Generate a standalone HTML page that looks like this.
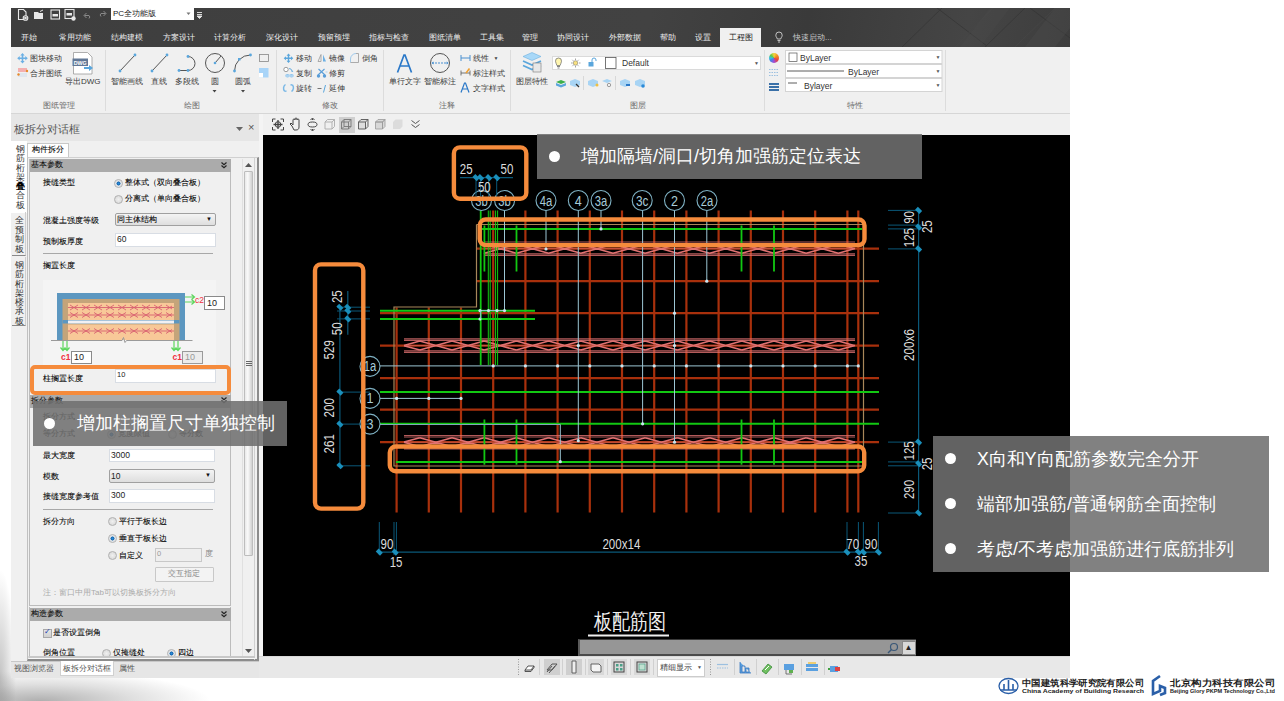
<!DOCTYPE html>
<html><head><meta charset="utf-8">
<style>
*{margin:0;padding:0;box-sizing:border-box}
html,body{width:1284px;height:701px;overflow:hidden;background:#fff;font-family:"Liberation Sans",sans-serif}
#root{position:relative;width:1284px;height:701px;overflow:hidden}
.a{position:absolute}
.t{position:absolute;white-space:nowrap;line-height:1}
.mt{color:#eeeeee;font-size:8px}
.rt{color:#3a3a3a;font-size:8px}
.gl{color:#6a6a6a;font-size:8px}
.pt{color:#000;font-size:8px;-webkit-text-stroke:0.08px #000}
.inp{position:absolute;background:#fff;border:1px solid #d8dde4}
.sel{position:absolute;background:linear-gradient(#f4f4f4,#dedede);border:1px solid #a0a0a0;border-radius:2px}
.sechd{position:absolute;background:#ababab}
.radio{position:absolute;width:9px;height:9px;border-radius:50%;border:1px solid #b0b0b0;background:radial-gradient(circle,#f0f0f0,#d4d4d4)}
.radio.on{background:radial-gradient(circle,#2d8fd8 0,#1565b0 35%,#cfd8e0 45%,#f5f5f5 80%)}
.callout{position:absolute;background:rgba(112,112,112,0.88);color:#fff}
.bul{position:absolute;width:11px;height:11px;border-radius:50%;background:#fff}
.ob{position:absolute;border:4.5px solid #f58b3c;border-radius:7px}
</style></head><body><div id="root">

<!-- smoke texture bottom-left -->
<div class="a" style="left:0;top:560px;width:320px;height:141px;background:radial-gradient(ellipse 170px 30px at 40px 141px,rgba(110,110,110,.55),rgba(150,150,150,.3) 55%,rgba(255,255,255,0) 100%),radial-gradient(ellipse 16px 110px at 0px 120px,rgba(120,120,120,.45),rgba(255,255,255,0) 100%)"></div>
<!-- App window -->
<div class="a" style="left:11px;top:8px;width:1059px;height:670px;background:#f0f0f0"></div>
<!-- title bar -->
<div class="a" style="left:11px;top:8px;width:1059px;height:39px;background:linear-gradient(100deg,#3e3e3e 0%,#424242 60%,#3a3a3a 75%,#454545 90%,#3d3d3d 100%)"></div>
<svg class="a" style="left:880px;top:8px" width="190" height="39" viewBox="880 8 190 39">
<g stroke-width="1" fill="none" opacity="0.45">
<path d="M902,47l40-39" stroke="#2e2e2e"/><path d="M937,8l50,38" stroke="#2c2c2c"/>
<path d="M955,47l38-39" stroke="#4a4a4a"/><path d="M985,47l40-39" stroke="#2f2f2f"/><path d="M1015,47l40-39" stroke="#4c4c4c"/>
<path d="M1030,8l40,30" stroke="#2e2e2e"/>
</g>
<path d="M960,47l30-39h20l-30,39z" fill="#4a4a4a" opacity="0.35"/><path d="M1025,47l30-39h15v20l-15,19z" fill="#4c4c4c" opacity="0.35"/>
</svg>
<!-- quick access dropdown -->
<div class="a" style="left:111px;top:8px;width:83px;height:12px;background:#fff"></div>
<div class="t" style="left:113px;top:10px;font-size:8px;color:#222">PC全功能版</div>
<svg class="a" style="left:186px;top:12px" width="6" height="4"><path d="M0.5,0.5h4l-2,2.5z" fill="#777"/></svg>
<svg class="a" style="left:196px;top:11px" width="7" height="8"><path d="M1,1.5h5M1,3.5h5M1,5h5l-2.5,2.5z" stroke="#e8e8e8" stroke-width="0.9" fill="#e8e8e8"/></svg>

<!-- menu tabs -->
<div class="a" style="left:720px;top:28px;width:41px;height:19px;background:#f0f0f0"></div>
<div class="t mt" style="left:21px;top:34px">开始</div>
<div class="t mt" style="left:59px;top:34px">常用功能</div>
<div class="t mt" style="left:111px;top:34px">结构建模</div>
<div class="t mt" style="left:163px;top:34px">方案设计</div>
<div class="t mt" style="left:214px;top:34px">计算分析</div>
<div class="t mt" style="left:266px;top:34px">深化设计</div>
<div class="t mt" style="left:318px;top:34px">预留预埋</div>
<div class="t mt" style="left:369px;top:34px">指标与检查</div>
<div class="t mt" style="left:429px;top:34px">图纸清单</div>
<div class="t mt" style="left:480px;top:34px">工具集</div>
<div class="t mt" style="left:522px;top:34px">管理</div>
<div class="t mt" style="left:557px;top:34px">协同设计</div>
<div class="t mt" style="left:609px;top:34px">外部数据</div>
<div class="t mt" style="left:660px;top:34px">帮助</div>
<div class="t mt" style="left:695px;top:34px">设置</div>
<div class="t" style="left:729px;top:34px;font-size:8px;color:#222">工程图</div>
<div class="t" style="left:793px;top:34px;font-size:8px;color:#c8c8c8">快速启动...</div>

<!-- ribbon -->
<div class="a" style="left:769px;top:53px;width:10px;height:10px;border-radius:50%;background:conic-gradient(#f7d23a,#f08a24 60deg,#e8453c 120deg,#a04bd8 180deg,#3b8de8 240deg,#38c0e0 270deg,#5cc84a 310deg,#f7d23a)"></div>
<!-- quick access icons -->
<svg class="a" style="left:11px;top:8px" width="100" height="14" viewBox="11 8 100 14">
<g fill="none" stroke="#e8e8e8" stroke-width="1.1">
<path d="M18.5,9.5h5l2.5,2.5v7.5h-7.5z"/><circle cx="25.5" cy="18" r="2.3" fill="#3f3f3f"/><circle cx="25.5" cy="18" r="0.8" fill="#e8e8e8"/>
</g>
<path d="M34,12h4l1,1h4v6h-9z" fill="#e8e8e8"/><path d="M40,11.5l3-1.5" stroke="#e8e8e8" stroke-width="1"/>
<rect x="51" y="10" width="8.5" height="9" fill="none" stroke="#e8e8e8" stroke-width="1.1"/><rect x="52.5" y="14" width="5.5" height="2.5" fill="#e8e8e8"/>
<rect x="65" y="9.5" width="9" height="9" fill="none" stroke="#e8e8e8" stroke-width="1.1"/><rect x="66.5" y="13" width="5.5" height="2.5" fill="#e8e8e8"/><circle cx="73.5" cy="18.5" r="2.2" fill="#e8e8e8"/>
<path d="M84,15.5l2.5-2.5M84,15.5l2.5,2.5M84.5,15.5h4.5a2,2 0 0 1 0,3" fill="none" stroke="#8a8a8a" stroke-width="1"/>
<path d="M106,13.5l-2.5-2.5M106,13.5l-2.5,2.5M105.5,13.5h-4.5a2,2 0 0 0 0,3" fill="none" stroke="#8a8a8a" stroke-width="1"/>
</svg>

<!-- group: 图纸管理 -->
<svg class="a" style="left:11px;top:47px" width="1059" height="67" viewBox="11 47 1059 67" font-family="Liberation Sans, sans-serif">
<!-- separators -->
<g stroke="#dcdcdc" stroke-width="1">
<line x1="105.5" y1="50" x2="105.5" y2="111"/><line x1="276.5" y1="50" x2="276.5" y2="111"/><line x1="383.5" y1="50" x2="383.5" y2="111"/>
<line x1="510.5" y1="50" x2="510.5" y2="111"/><line x1="764.5" y1="50" x2="764.5" y2="111"/><line x1="945.5" y1="50" x2="945.5" y2="111"/>
</g>
<!-- move icon -->
<g fill="#6cb0e4"><path d="M22.5,53l2.2,2.5h-1.4v2h2v-1.4l2.5,2.2-2.5,2.2v-1.4h-2v2h1.4l-2.2,2.5-2.2-2.5h1.4v-2h-2v1.4l-2.5-2.2 2.5-2.2v1.4h2v-2h-1.4z"/></g>
<!-- merge icon -->
<rect x="18" y="68" width="9" height="4" fill="#f3b0b0"/><rect x="18" y="73" width="9" height="4" fill="#dfe6ee"/><circle cx="18.5" cy="74.5" r="1.2" fill="#e88a2a"/><circle cx="27" cy="71" r="1.2" fill="#e88a2a"/>
<!-- DWG icon -->
<path d="M73.5,52.5h14l4.5,4.5v17h-18.5z" fill="#fff" stroke="#9a9a9a" stroke-width="0.8"/>
<rect x="72.5" y="58.5" width="15.5" height="7.5" fill="#627896"/><text x="80.2" y="64.6" font-size="6" fill="#fff" text-anchor="middle" font-weight="bold" textLength="13" lengthAdjust="spacingAndGlyphs">DWG</text>
<path d="M84,67h5v-2l4,3-4,3v-2h-5z" fill="#5aa6dc"/>
<!-- draw icons -->
<g stroke="#555" stroke-width="1" fill="none">
<line x1="120" y1="71" x2="135" y2="55"/><line x1="152" y1="71" x2="167" y2="55"/>
<path d="M179,70.5h9a7,7 0 0 0 0,-14"/><circle cx="215" cy="63" r="9.5" stroke="#555"/><line x1="215" y1="63" x2="221" y2="56"/>
<path d="M234.5,71a16,16 0 0 1 16,-16"/>
<rect x="259.5" y="54.5" width="9" height="7" stroke="#888" stroke-width="0.8"/>
</g>
<g fill="#5aa6dc"><circle cx="120" cy="71" r="1.4"/><circle cx="135" cy="55" r="1.4"/><circle cx="152" cy="71" r="1.4"/><circle cx="167" cy="55" r="1.4"/>
<circle cx="179" cy="70.5" r="1.4"/><circle cx="188" cy="70.5" r="1.4"/><circle cx="188" cy="56.5" r="1.4"/><circle cx="215" cy="63" r="1.3"/>
<circle cx="234.5" cy="71" r="1.4"/><circle cx="250.5" cy="55" r="1.4"/><rect x="238" y="58" width="2.5" height="2.5"/></g>
<rect x="259" y="68" width="9.5" height="9.5" fill="#a8d4f8"/><rect x="259" y="73" width="4" height="4.5" fill="#fff"/>
<path d="M212.5,90h4l-2,2.5zM241,90h4l-2,2.5z" fill="#444"/>
<!-- modify icons -->
<path d="M288.5,53.5l2,2.3h-1.3v1.8h1.8v-1.3l2.3,2-2.3,2v-1.3h-1.8v1.8h1.3l-2,2.3-2-2.3h1.3v-1.8h-1.8v1.3l-2.3-2 2.3-2v1.3h1.8v-1.8h-1.3z" fill="#5aa6dc"/>
<circle cx="286" cy="69.5" r="2.2" fill="#fff" stroke="#777" stroke-width="0.7"/><path d="M289,68.5a3,3 0 0 1 3,2.5" fill="none" stroke="#5aa6dc" stroke-width="0.9"/><path d="M291,71.5l1.5-1 0.8,1.6z" fill="#5aa6dc"/>
<ellipse cx="287.5" cy="75.8" rx="2.3" ry="1.7" fill="#8fc4ec"/><ellipse cx="291.5" cy="75.8" rx="2.3" ry="1.7" fill="#8fc4ec"/><path d="M285.5,76h8" stroke="#fff" stroke-width="0.5"/>
<path d="M285.5,84.5a4.5,4.5 0 0 0 -1,6.5M284.5,91l2,0.3M291.5,91.5a4.5,4.5 0 0 0 1,-6.5M292.5,85l-2,-0.3" fill="none" stroke="#7ab8e6" stroke-width="1.5"/>
<path d="M318,61.5l3-7v7z" fill="none" stroke="#999" stroke-width="0.8"/><path d="M323,61.5v-7l3,7z" fill="#6cb0e4"/>
<path d="M318.5,69l6.5,6M324.5,69l-6.5,6" stroke="#5a9ed8" stroke-width="1.1"/><circle cx="318.5" cy="76" r="1.7" fill="#5a9ed8"/><circle cx="324.5" cy="76" r="1.7" fill="#5a9ed8"/><path d="M325.5,72h2" stroke="#9cc6e8" stroke-width="0.8"/>
<path d="M317.5,88.5h4" stroke="#666" stroke-width="0.9"/><path d="M323.5,92.5l2-7.5" stroke="#5aa6dc" stroke-width="1"/>
<path d="M350.5,62.5v-3.5a5.5,5.5 0 0 1 5.5,-5.5" fill="none" stroke="#8cc0ea" stroke-width="0.8"/><path d="M356,53.5h2.5v9h-8" fill="none" stroke="#999" stroke-width="0.8"/>
<!-- annotation -->
<path d="M397.5,72.5l6.5-17.5h1l6.5,17.5M400,66h9" fill="none" stroke="#2a78c8" stroke-width="1.7"/>
<circle cx="440" cy="63" r="9.5" fill="none" stroke="#555" stroke-width="1"/><path d="M432,63h16" stroke="#4a90d0" stroke-width="1" stroke-dasharray="2,1"/><path d="M431.5,63l2,-1.5v3zM448.5,63l-2,-1.5v3z" fill="#4a90d0"/>
<path d="M461,55v6M470,55v6M461,58h9" stroke="#4a90d0" stroke-width="1"/>
<path d="M461,73h9M461,70.5v5M470,70.5v5" stroke="#555" stroke-width="0.8"/><path d="M466,73l3.5,-4.5" stroke="#f0a030" stroke-width="1.6"/>
<path d="M461,92.5l3.5-9.5h1l3.5,9.5M462.5,89h5" fill="none" stroke="#2a78c8" stroke-width="1.2"/>
<text x="493.5" y="60" font-size="5" fill="#444">▼</text>
<!-- layer -->
<path d="M532,52.5l9,4-9,4-9-4z" fill="#a8d8f8" stroke="#5aa6dc" stroke-width="0.5"/><path d="M523,61l9,4 9-4" fill="none" stroke="#5aa6dc" stroke-width="1.6"/><path d="M523,65.5l9,4 9-4" fill="none" stroke="#5aa6dc" stroke-width="1.6"/>
<rect x="533" y="63" width="8" height="9" fill="#e8e8e8" stroke="#777" stroke-width="0.6"/>
<rect x="552.5" y="56.5" width="208" height="13" fill="#fff" stroke="#dadada"/>
<path d="M558.5,58a3,3 0 0 1 3,3.2c0,1.8-1.1,2.5-1.4,4.3h-3.2c-0.3-1.8-1.4-2.5-1.4-4.3a3,3 0 0 1 3,-3.2z" fill="#fff6b0" stroke="#666" stroke-width="0.7"/><path d="M557,66.5h3M557.5,68h2" stroke="#666" stroke-width="0.8"/>
<circle cx="575.5" cy="63" r="2.3" fill="#f8e080" stroke="#666" stroke-width="0.5"/><g stroke="#666" stroke-width="0.6"><path d="M575.5,58.5v1.5M575.5,66v1.5M571,63h1.5M579,63h1.5M572.3,59.8l1,1M577.7,65.2l1,1M572.3,66.2l1-1M577.7,60.8l1-1"/></g>
<rect x="588.5" y="62" width="5" height="4.5" fill="#5aa6dc"/><path d="M592,62v-2a2,2 0 0 1 4,0v1" fill="none" stroke="#5aa6dc" stroke-width="1"/>
<rect x="605.5" y="57.5" width="10.5" height="11" fill="#fff" stroke="#555" stroke-width="0.8"/>
<text x="622" y="66" font-size="8.5" fill="#333">Default</text><text x="754" y="65" font-size="5" fill="#555">▼</text>
<g fill="#5aa6dc"><path d="M556,82l5-2 5,2-5,2z" fill="#3cb04a"/><path d="M556,83v2.5l5,2 5-2v-2.5l-5,2z"/>
<path d="M570,81l5-2 5,2v4l-5,2-5-2z" fill="#a8d4f4"/><path d="M576,84l3,3" stroke="#333" stroke-width="1.2"/>
<path d="M588,81l5-2 5,2v4l-5,2-5-2z" fill="#a8d4f4"/><circle cx="597" cy="85" r="1.5" fill="#f0c040"/>
<path d="M602,81l5-2 5,2-5,2z" fill="#a8d4f4"/><circle cx="609" cy="85" r="1.7" fill="none" stroke="#666" stroke-width="0.6"/>
<path d="M620,81l5-2 5,2v4l-5,2-5-2z" fill="#a8d4f4"/><path d="M626,85h4" stroke="#2a78c8" stroke-width="2"/>
<path d="M635,81l5-2 5,2v4l-5,2-5-2z" fill="#a8d4f4"/><circle cx="643" cy="86" r="1.8" fill="#2a8ad8"/>
</g>
<g stroke="#d8d8d8"><line x1="583.5" y1="76" x2="583.5" y2="90"/><line x1="615.5" y1="76" x2="615.5" y2="90"/></g>
<!-- properties -->

<defs><linearGradient id="cw" x1="0" y1="0" x2="1" y2="1"><stop offset="0" stop-color="#f5a623"/><stop offset=".35" stop-color="#7ed321"/><stop offset=".6" stop-color="#4a90e2"/><stop offset="1" stop-color="#bd10e0"/></linearGradient></defs>
<g stroke="#9cc0e0" stroke-width="1" stroke-dasharray="1.5,1"><line x1="769" y1="69.5" x2="779" y2="69.5"/><line x1="769" y1="72.5" x2="779" y2="72.5"/><line x1="769" y1="75.5" x2="779" y2="75.5"/></g>
<g fill="#3a70a8"><rect x="769" y="83" width="10" height="2"/><rect x="769" y="86" width="10" height="2"/><rect x="769" y="89" width="10" height="2"/></g>
<g fill="#fff" stroke="#d4d4d4"><rect x="785.5" y="50.5" width="156.5" height="13"/><rect x="785.5" y="64.5" width="156.5" height="13"/><rect x="785.5" y="78.5" width="156.5" height="13"/></g>
<rect x="789" y="53" width="8" height="8.5" fill="#fff" stroke="#555" stroke-width="0.7"/>
<text x="800" y="60.5" font-size="8.5" fill="#333">ByLayer</text>
<line x1="787" y1="71" x2="844" y2="71" stroke="#333" stroke-width="0.8"/><text x="848" y="74.5" font-size="8.5" fill="#333">ByLayer</text>
<line x1="788" y1="83" x2="797" y2="83" stroke="#333" stroke-width="0.8"/><text x="804" y="88.5" font-size="8.5" fill="#333">Bylayer</text>
<g font-size="5" fill="#555"><text x="935.5" y="59">▼</text><text x="935.5" y="73">▼</text><text x="935.5" y="87">▼</text></g>
</svg>
<div class="t rt" style="left:30px;top:55px">图块移动</div>
<div class="t rt" style="left:30px;top:70px">合并图纸</div>
<div class="t rt" style="left:65px;top:78px">导出DWG</div>
<div class="t rt" style="left:111px;top:78px">智能画线</div>
<div class="t rt" style="left:151px;top:78px">直线</div>
<div class="t rt" style="left:175px;top:78px">多段线</div>
<div class="t rt" style="left:211px;top:78px">圆</div>
<div class="t rt" style="left:235px;top:78px">圆弧</div>
<div class="t rt" style="left:296px;top:55px">移动</div>
<div class="t rt" style="left:329px;top:55px">镜像</div>
<div class="t rt" style="left:362px;top:55px">倒角</div>
<div class="t rt" style="left:296px;top:70px">复制</div>
<div class="t rt" style="left:329px;top:70px">修剪</div>
<div class="t rt" style="left:296px;top:85px">旋转</div>
<div class="t rt" style="left:329px;top:85px">延伸</div>
<div class="t rt" style="left:389px;top:78px">单行文字</div>
<div class="t rt" style="left:424px;top:78px">智能标注</div>
<div class="t rt" style="left:473px;top:55px">线性</div>
<div class="t rt" style="left:473px;top:70px">标注样式</div>
<div class="t rt" style="left:473px;top:85px">文字样式</div>
<div class="t rt" style="left:516px;top:78px">图层特性</div>
<div class="t gl" style="left:43px;top:102px">图纸管理</div>
<div class="t gl" style="left:184px;top:102px">绘图</div>
<div class="t gl" style="left:322px;top:102px">修改</div>
<div class="t gl" style="left:439px;top:102px">注释</div>
<div class="t gl" style="left:630px;top:102px">图层</div>
<div class="t gl" style="left:847px;top:102px">特性</div>
<div class="a" style="left:11px;top:113px;width:1059px;height:1px;background:#d6d6d6"></div>

<!-- below ribbon area -->
<div class="a" style="left:11px;top:114px;width:248px;height:27px;background:#e6e6e6"></div>
<div class="t" style="left:14px;top:123.5px;font-size:10.6px;color:#555">板拆分对话框</div>
<svg class="a" style="left:235px;top:126px" width="9" height="6"><path d="M1,1h7l-3.5,4z" fill="#666"/></svg>
<div class="t" style="left:248px;top:122px;font-size:11px;color:#555">×</div>
<!-- panel body -->
<div class="a" style="left:11px;top:141px;width:248px;height:520px;background:#f0f0f0"></div>
<!-- vertical tabs -->
<div class="a" style="left:11px;top:141px;width:16px;height:72px;background:#fff"></div>
<div class="a" style="left:12px;top:212px;width:14px;height:44px;border-bottom:1px solid #8a8a8a;border-right:1px solid #cfcfcf"></div>
<div class="a" style="left:12px;top:257px;width:14px;height:69px;border-bottom:1px solid #8a8a8a;border-right:1px solid #cfcfcf"></div>
<div class="t" style="left:16px;top:145px;font-size:9px;line-height:9.3px;width:10px;white-space:normal;color:#333">钢筋桁架<b style="color:#000">叠</b>合板</div>
<div class="t" style="left:15px;top:216px;font-size:9px;line-height:9.5px;width:10px;white-space:normal;color:#333">全预制板</div>
<div class="t" style="left:15px;top:261px;font-size:9px;line-height:9.3px;width:10px;white-space:normal;color:#333">钢筋桁架楼承板</div>
<!-- tab strip -->
<div class="a" style="left:27px;top:143px;width:42px;height:15px;background:#fff;border:1px solid #c8c8c8;border-bottom:none"></div>
<div class="t pt" style="left:32px;top:146px">构件拆分</div>
<!-- content frame -->
<div class="a" style="left:27px;top:157px;width:232px;height:504px;border:1px solid #c0c0c0;border-top-color:#d0d0d0;border-right:2px solid #8c8c8c;border-bottom:2px solid #8c8c8c;background:#f0f0f0"></div>
<div class="a" style="left:254px;top:157px;width:1px;height:503px;background:#d0d0d0"></div>
<!-- scroll content border -->
<div class="a" style="left:29px;top:159px;width:202px;height:447px;border:1px solid #bcbcbc;border-top:none"></div>
<div class="a" style="left:29px;top:607px;width:202px;height:50px;border-left:1px solid #bcbcbc;border-right:1px solid #bcbcbc"></div>
<div class="a" style="left:28px;top:656px;width:227px;height:2px;background:#d8d8d8"></div>
<!-- scrollbar -->
<div class="a" style="left:242px;top:159px;width:12px;height:497px;background:#f0f0f0;border-left:1px solid #e0e0e0"></div>
<div class="a" style="left:243.5px;top:171px;width:9.5px;height:385px;background:linear-gradient(90deg,#e8e8e8,#fafafa 40%,#d0d0d0);border:1px solid #bdbdbd;border-radius:1px"></div>
<svg class="a" style="left:244px;top:162px" width="9" height="6"><path d="M1,5h7l-3.5,-4z" fill="#555"/></svg>
<svg class="a" style="left:244px;top:648px" width="9" height="6"><path d="M1,1h7l-3.5,4z" fill="#555"/></svg>
<div class="a" style="left:245.5px;top:361px;width:6px;height:5px;border-top:1px solid #666;border-bottom:1px solid #666"></div><div class="a" style="left:245.5px;top:363px;width:6px;height:1px;background:#666"></div>
<!-- section 基本参数 -->
<div class="sechd" style="left:30px;top:159px;width:201px;height:13px"></div>
<div class="t pt" style="left:31px;top:161px;color:#111">基本参数</div>
<svg class="a" style="left:220px;top:161px" width="8" height="9"><path d="M1.5,1.5l2.5,2.2 2.5-2.2M1.5,4.5l2.5,2.2 2.5-2.2" fill="none" stroke="#222" stroke-width="1.2"/></svg>
<div class="t pt" style="left:43px;top:179px">接缝类型</div>
<div class="radio on" style="left:113.5px;top:178.5px"></div><div class="t pt" style="left:125px;top:179px">整体式（双向叠合板）</div>
<div class="radio" style="left:113.5px;top:194.5px"></div><div class="t pt" style="left:125px;top:195px">分离式（单向叠合板）</div>
<div class="t pt" style="left:43px;top:216.5px">混凝土强度等级</div>
<div class="sel" style="left:115px;top:212.5px;width:100.5px;height:13.5px"></div><div class="t pt" style="left:117px;top:215.5px">同主体结构</div><div class="t" style="left:206px;top:216px;font-size:6px;color:#111">▼</div>
<div class="t pt" style="left:43px;top:238px">预制板厚度</div>
<div class="inp" style="left:115px;top:233px;width:100.5px;height:14px"></div><div class="t" style="left:117px;top:235px;font-size:8.5px;color:#222">60</div>
<div class="a" style="left:43px;top:253px;width:170px;height:1px;background:#a8a8a8"></div>
<div class="t pt" style="left:43px;top:261.5px">搁置长度</div>
<!-- illustration -->
<svg class="a" style="left:43px;top:280px" width="185" height="86" viewBox="43 280 185 86">
<rect x="43" y="280" width="173" height="86" fill="#f4f4f4"/>
<rect x="57" y="293" width="128" height="47" fill="#5c97c0"/>
<rect x="62.5" y="299" width="117" height="41" fill="#c4a47a"/>
<rect x="68" y="303" width="106" height="17" fill="#f8c898"/>
<rect x="62.5" y="320" width="117" height="3.5" fill="#5c97c0"/>
<rect x="68" y="320.5" width="106" height="3" fill="#f0f0f4"/>
<rect x="68" y="324.5" width="106" height="15.5" fill="#f8c898"/>
<g stroke="#d86070" stroke-width="0.9" fill="none">
<line x1="68" y1="307.5" x2="174" y2="307.5"/><line x1="68" y1="315" x2="174" y2="315"/><line x1="68" y1="331" x2="174" y2="331"/>
<path d="M70,305l8,5M70,310l8,-5M82,305l8,5M82,310l8,-5M94,305l8,5M94,310l8,-5M106,305l8,5M106,310l8,-5M118,305l8,5M118,310l8,-5M130,305l8,5M130,310l8,-5M142,305l8,5M142,310l8,-5M154,305l8,5M154,310l8,-5M166,305l6,4M166,310l6,-4"/>
<path d="M70,312.5l8,5M70,317.5l8,-5M82,312.5l8,5M82,317.5l8,-5M94,312.5l8,5M94,317.5l8,-5M106,312.5l8,5M106,317.5l8,-5M118,312.5l8,5M118,317.5l8,-5M130,312.5l8,5M130,317.5l8,-5M142,312.5l8,5M142,317.5l8,-5M154,312.5l8,5M154,317.5l8,-5M166,312.5l6,4M166,317.5l6,-4"/>
<path d="M70,328.5l8,5M70,333.5l8,-5M82,328.5l8,5M82,333.5l8,-5M94,328.5l8,5M94,333.5l8,-5M106,328.5l8,5M106,333.5l8,-5M118,328.5l8,5M118,333.5l8,-5M130,328.5l8,5M130,333.5l8,-5M142,328.5l8,5M142,333.5l8,-5M154,328.5l8,5M154,333.5l8,-5M166,328.5l6,4M166,333.5l6,-4"/>
</g>
<path d="M51,340.5h71l1.5,-3 1.5,5 1.5,-2h66" fill="none" stroke="#9a9a9a" stroke-width="1"/>
<g stroke="#5cd65c" stroke-width="1.2" fill="none">
<path d="M63,341v9M60.5,347.5l2.5,3 2.5,-3M67,341v9M64.5,347.5l2.5,3 2.5,-3"/>
<path d="M174,341v9M171.5,347.5l2.5,3 2.5,-3M178,341v9M175.5,347.5l2.5,3 2.5,-3"/>
<path d="M185,297h9M191.5,294.5l3,2.5-3,2.5M185,302h9M191.5,299.5l3,2.5-3,2.5"/>
</g>
<text x="195" y="303" font-size="8.5" fill="#f03040" font-family="Liberation Sans, sans-serif">c2</text>
<text x="61" y="359.5" font-size="8.5" fill="#f03040" font-weight="bold" font-family="Liberation Sans, sans-serif">c1</text>
<text x="172.5" y="359.5" font-size="8.5" fill="#f03040" font-weight="bold" font-family="Liberation Sans, sans-serif">c1</text>
</svg>
<div class="inp" style="left:204px;top:296px;width:20.5px;height:13.5px;border-color:#8a8a8a"></div><div class="t" style="left:207px;top:298.5px;font-size:9px;color:#222">10</div>
<div class="inp" style="left:71px;top:350.5px;width:21px;height:13.5px;border-color:#8a8a8a"></div><div class="t" style="left:74px;top:353px;font-size:9px;color:#222">10</div>
<div class="inp" style="left:182px;top:350.5px;width:21px;height:13.5px;border-color:#9a9a9a;background:#ececec"></div><div class="t" style="left:185px;top:353px;font-size:9px;color:#999">10</div>
<div class="t pt" style="left:43px;top:374.5px">柱搁置长度</div>
<div class="inp" style="left:115px;top:369px;width:100.5px;height:14px"></div><div class="t" style="left:117px;top:371px;font-size:7.5px;color:#222">10</div>
<div class="ob" style="left:30px;top:365px;width:200.5px;height:29.5px;border-width:4.3px;border-radius:5px"></div>
<!-- section 拆分参数 -->
<div class="sechd" style="left:30px;top:395px;width:201px;height:13px"></div>
<div class="t pt" style="left:31px;top:397px;color:#111">拆分参数</div>
<svg class="a" style="left:220px;top:396px" width="8" height="9"><path d="M1.5,1.5l2.5,2.2 2.5-2.2M1.5,4.5l2.5,2.2 2.5-2.2" fill="none" stroke="#222" stroke-width="1.2"/></svg>
<div class="t pt" style="left:43px;top:413px">拆分方式</div>
<div class="t pt" style="left:43px;top:430px">等分方式</div>
<div class="radio on" style="left:107px;top:429.5px"></div><div class="t pt" style="left:118px;top:430px">宽度限值</div>
<div class="radio" style="left:168px;top:429.5px"></div><div class="t pt" style="left:179px;top:430px">等分数</div>
<div class="t pt" style="left:43px;top:452px">最大宽度</div>
<div class="inp" style="left:108.5px;top:448.5px;width:106px;height:13.5px"></div><div class="t" style="left:111px;top:450.5px;font-size:8.5px;color:#222">3000</div>
<div class="t pt" style="left:43px;top:472.5px">模数</div>
<div class="sel" style="left:108.5px;top:468.5px;width:106px;height:14px"></div><div class="t" style="left:111px;top:471.5px;font-size:8.5px;color:#222">10</div><div class="t" style="left:205px;top:472px;font-size:6px;color:#111">▼</div>
<div class="t pt" style="left:43px;top:493px">接缝宽度参考值</div>
<div class="inp" style="left:108.5px;top:488.5px;width:106px;height:14.5px"></div><div class="t" style="left:111px;top:490.5px;font-size:8.5px;color:#222">300</div>
<div class="a" style="left:43px;top:509px;width:170px;height:1px;background:#a8a8a8"></div>
<div class="t pt" style="left:43px;top:517.5px">拆分方向</div>
<div class="radio" style="left:107.5px;top:517px"></div><div class="t pt" style="left:119px;top:517.5px">平行于板长边</div>
<div class="radio on" style="left:107.5px;top:534px"></div><div class="t pt" style="left:119px;top:534.5px">垂直于板长边</div>
<div class="radio" style="left:107.5px;top:551px"></div><div class="t pt" style="left:119px;top:551.5px">自定义</div>
<div class="inp" style="left:154.5px;top:547.5px;width:47px;height:14px;background:#eeeeee;border-color:#c8c8c8"></div><div class="t" style="left:157px;top:549.5px;font-size:7.5px;color:#999">0</div>
<div class="t" style="left:205px;top:550px;font-size:8px;color:#888">度</div>
<div class="a" style="left:154.5px;top:566.5px;width:59px;height:15px;background:#f3f3f3;border:1px solid #c8c8c8;border-radius:1px"></div><div class="t" style="left:168px;top:570px;font-size:8px;color:#888">交互指定</div>
<div class="t" style="left:43px;top:589px;font-size:8px;color:#aaa">注：窗口中用Tab可以切换板拆分方向</div>
<!-- section 构造参数 -->
<div class="sechd" style="left:30px;top:608px;width:201px;height:12.5px"></div>
<div class="t pt" style="left:31px;top:610px;color:#111">构造参数</div>
<svg class="a" style="left:220px;top:609.5px" width="8" height="9"><path d="M1.5,1.5l2.5,2.2 2.5-2.2M1.5,4.5l2.5,2.2 2.5-2.2" fill="none" stroke="#222" stroke-width="1.2"/></svg>
<div class="a" style="left:43px;top:629px;width:8.5px;height:8.5px;background:linear-gradient(#e4e4e4,#d0d0d0);border:1px solid #a8a8a8"></div><div class="t" style="left:44px;top:628px;font-size:8px;color:#2040b0">✓</div>
<div class="t pt" style="left:53px;top:629px">是否设置倒角</div>
<div class="t pt" style="left:43px;top:649px">倒角位置</div>
<div class="radio" style="left:101.5px;top:649px"></div><div class="t pt" style="left:113px;top:649px">仅掩缝处</div>
<div class="radio on" style="left:166.5px;top:649px"></div><div class="t pt" style="left:178px;top:649px">四边</div>
<!-- clip bottom of scroll content -->
<div class="a" style="left:29px;top:656px;width:226px;height:3px;background:#f8f8f8;border-top:2px solid #c8c8c8"></div>
<!-- bottom tabs -->
<div class="a" style="left:11px;top:661px;width:248px;height:17px;background:#e6e6e6;border-top:1px solid #c8c8c8"></div>
<div class="t" style="left:14px;top:664.5px;font-size:8px;color:#555">视图浏览器</div>
<div class="a" style="left:60px;top:661px;width:54px;height:15px;background:#fff;border:1px solid #d0d0d0;border-top:none"></div>
<div class="t" style="left:63px;top:664.5px;font-size:8px;color:#555">板拆分对话框</div>
<div class="t" style="left:119px;top:664.5px;font-size:8px;color:#555">属性</div>

<!-- drawing area -->
<div class="a" style="left:263px;top:135px;width:807px;height:521px;background:#000"></div>
<svg class="a" style="left:263px;top:135px" width="807" height="521" viewBox="263 135 807 521" font-family="Liberation Sans, sans-serif"><line x1="396.6" y1="307.5" x2="396.6" y2="512.5" stroke="#a8300c" stroke-width="2.2"/><line x1="428.8" y1="307.5" x2="428.8" y2="512.5" stroke="#a8300c" stroke-width="2.2"/><line x1="461.0" y1="307.5" x2="461.0" y2="512.5" stroke="#a8300c" stroke-width="2.2"/><line x1="493.20000000000005" y1="210.5" x2="493.20000000000005" y2="512.5" stroke="#a8300c" stroke-width="2.2"/><line x1="525.4000000000001" y1="210.5" x2="525.4000000000001" y2="512.5" stroke="#a8300c" stroke-width="2.2"/><line x1="557.6" y1="210.5" x2="557.6" y2="512.5" stroke="#a8300c" stroke-width="2.2"/><line x1="589.8000000000001" y1="210.5" x2="589.8000000000001" y2="512.5" stroke="#a8300c" stroke-width="2.2"/><line x1="622.0" y1="210.5" x2="622.0" y2="512.5" stroke="#a8300c" stroke-width="2.2"/><line x1="654.2" y1="210.5" x2="654.2" y2="512.5" stroke="#a8300c" stroke-width="2.2"/><line x1="686.4000000000001" y1="210.5" x2="686.4000000000001" y2="512.5" stroke="#a8300c" stroke-width="2.2"/><line x1="718.6" y1="210.5" x2="718.6" y2="512.5" stroke="#a8300c" stroke-width="2.2"/><line x1="750.8000000000001" y1="210.5" x2="750.8000000000001" y2="512.5" stroke="#a8300c" stroke-width="2.2"/><line x1="783.0" y1="210.5" x2="783.0" y2="512.5" stroke="#a8300c" stroke-width="2.2"/><line x1="815.2" y1="210.5" x2="815.2" y2="512.5" stroke="#a8300c" stroke-width="2.2"/><line x1="847.4000000000001" y1="210.5" x2="847.4000000000001" y2="512.5" stroke="#a8300c" stroke-width="2.2"/><line x1="858.3" y1="210.5" x2="858.3" y2="512.5" stroke="#a8300c" stroke-width="2.2"/><line x1="477" y1="248.7" x2="879" y2="248.7" stroke="#a8300c" stroke-width="2.2"/><line x1="477" y1="281.2" x2="879" y2="281.2" stroke="#a8300c" stroke-width="2.2"/><line x1="380" y1="313.2" x2="879" y2="313.2" stroke="#a8300c" stroke-width="2.2"/><line x1="380" y1="345.6" x2="879" y2="345.6" stroke="#a8300c" stroke-width="2.2"/><line x1="380" y1="378.1" x2="879" y2="378.1" stroke="#a8300c" stroke-width="2.2"/><line x1="380" y1="409.6" x2="879" y2="409.6" stroke="#a8300c" stroke-width="2.2"/><line x1="380" y1="442.2" x2="879" y2="442.2" stroke="#a8300c" stroke-width="2.2"/><polyline points="476.5,224.5 863.5,224.5 863.5,466 394,466 394,307 476.5,307 476.5,224.5" fill="none" stroke="#a8885a" stroke-width="1.2"/><line x1="484" y1="242.0" x2="855" y2="242.0" stroke="#e07272" stroke-width="1.2" opacity="0.8"/><line x1="484" y1="243.5" x2="855" y2="243.5" stroke="#e07272" stroke-width="1.2" opacity="0.8"/><line x1="484" y1="253.89999999999998" x2="855" y2="253.89999999999998" stroke="#e07272" stroke-width="1.2" opacity="0.8"/><line x1="484" y1="255.39999999999998" x2="855" y2="255.39999999999998" stroke="#e07272" stroke-width="1.2" opacity="0.8"/><line x1="484" y1="248.7" x2="855" y2="248.7" stroke="#e07272" stroke-width="1" opacity="0.6"/><path d="M484.0,253.1L484.2,253.2M484.2,253.2L516.4,244.2M516.4,244.2L548.6,253.2M548.6,253.2L580.8,244.2M580.8,244.2L613.0,253.2M613.0,253.2L645.2,244.2M645.2,244.2L677.4,253.2M677.4,253.2L709.6,244.2M709.6,244.2L741.8,253.2M741.8,253.2L774.0,244.2M774.0,244.2L806.2,253.2M806.2,253.2L838.4,244.2M838.4,244.2L855.0,248.8M484.0,244.3L484.2,244.2M484.2,244.2L516.4,253.2M516.4,253.2L548.6,244.2M548.6,244.2L580.8,253.2M580.8,253.2L613.0,244.2M613.0,244.2L645.2,253.2M645.2,253.2L677.4,244.2M677.4,244.2L709.6,253.2M709.6,253.2L741.8,244.2M741.8,244.2L774.0,253.2M774.0,253.2L806.2,244.2M806.2,244.2L838.4,253.2M838.4,253.2L855.0,248.6" fill="none" stroke="#e07272" stroke-width="1.6"/><line x1="404" y1="338.90000000000003" x2="855" y2="338.90000000000003" stroke="#e07272" stroke-width="1.2" opacity="0.8"/><line x1="404" y1="340.40000000000003" x2="855" y2="340.40000000000003" stroke="#e07272" stroke-width="1.2" opacity="0.8"/><line x1="404" y1="350.8" x2="855" y2="350.8" stroke="#e07272" stroke-width="1.2" opacity="0.8"/><line x1="404" y1="352.3" x2="855" y2="352.3" stroke="#e07272" stroke-width="1.2" opacity="0.8"/><line x1="404" y1="345.6" x2="855" y2="345.6" stroke="#e07272" stroke-width="1" opacity="0.6"/><path d="M404.0,345.7L419.8,350.1M419.8,350.1L452.0,341.1M452.0,341.1L484.2,350.1M484.2,350.1L516.4,341.1M516.4,341.1L548.6,350.1M548.6,350.1L580.8,341.1M580.8,341.1L613.0,350.1M613.0,350.1L645.2,341.1M645.2,341.1L677.4,350.1M677.4,350.1L709.6,341.1M709.6,341.1L741.8,350.1M741.8,350.1L774.0,341.1M774.0,341.1L806.2,350.1M806.2,350.1L838.4,341.1M838.4,341.1L855.0,345.7M404.0,345.5L419.8,341.1M419.8,341.1L452.0,350.1M452.0,350.1L484.2,341.1M484.2,341.1L516.4,350.1M516.4,350.1L548.6,341.1M548.6,341.1L580.8,350.1M580.8,350.1L613.0,341.1M613.0,341.1L645.2,350.1M645.2,350.1L677.4,341.1M677.4,341.1L709.6,350.1M709.6,350.1L741.8,341.1M741.8,341.1L774.0,350.1M774.0,350.1L806.2,341.1M806.2,341.1L838.4,350.1M838.4,350.1L855.0,345.5" fill="none" stroke="#e07272" stroke-width="1.6"/><line x1="404" y1="435.5" x2="855" y2="435.5" stroke="#e07272" stroke-width="1.2" opacity="0.8"/><line x1="404" y1="437.0" x2="855" y2="437.0" stroke="#e07272" stroke-width="1.2" opacity="0.8"/><line x1="404" y1="447.4" x2="855" y2="447.4" stroke="#e07272" stroke-width="1.2" opacity="0.8"/><line x1="404" y1="448.9" x2="855" y2="448.9" stroke="#e07272" stroke-width="1.2" opacity="0.8"/><line x1="404" y1="442.2" x2="855" y2="442.2" stroke="#e07272" stroke-width="1" opacity="0.6"/><path d="M404.0,442.3L419.8,446.7M419.8,446.7L452.0,437.7M452.0,437.7L484.2,446.7M484.2,446.7L516.4,437.7M516.4,437.7L548.6,446.7M548.6,446.7L580.8,437.7M580.8,437.7L613.0,446.7M613.0,446.7L645.2,437.7M645.2,437.7L677.4,446.7M677.4,446.7L709.6,437.7M709.6,437.7L741.8,446.7M741.8,446.7L774.0,437.7M774.0,437.7L806.2,446.7M806.2,446.7L838.4,437.7M838.4,437.7L855.0,442.3M404.0,442.1L419.8,437.7M419.8,437.7L452.0,446.7M452.0,446.7L484.2,437.7M484.2,437.7L516.4,446.7M516.4,446.7L548.6,437.7M548.6,437.7L580.8,446.7M580.8,446.7L613.0,437.7M613.0,437.7L645.2,446.7M645.2,446.7L677.4,437.7M677.4,437.7L709.6,446.7M709.6,446.7L741.8,437.7M741.8,437.7L774.0,446.7M774.0,446.7L806.2,437.7M806.2,437.7L838.4,446.7M838.4,446.7L855.0,442.1" fill="none" stroke="#e07272" stroke-width="1.6"/><line x1="482" y1="228.9" x2="862" y2="228.9" stroke="#12c812" stroke-width="2"/><line x1="380" y1="310.8" x2="535" y2="310.8" stroke="#12c812" stroke-width="2"/><line x1="380" y1="319" x2="535" y2="319" stroke="#12c812" stroke-width="2"/><line x1="380" y1="392" x2="879" y2="392" stroke="#12c812" stroke-width="2"/><line x1="380" y1="423.8" x2="879" y2="423.8" stroke="#12c812" stroke-width="2"/><line x1="396" y1="461.9" x2="862" y2="461.9" stroke="#12c812" stroke-width="2"/><line x1="480.7" y1="210.5" x2="480.7" y2="365" stroke="#12c812" stroke-width="1.8"/><line x1="488.3" y1="210.5" x2="488.3" y2="365" stroke="#12c812" stroke-width="1"/><line x1="490.2" y1="210.5" x2="490.2" y2="365" stroke="#12c812" stroke-width="1"/><line x1="495.6" y1="210.5" x2="495.6" y2="365" stroke="#12c812" stroke-width="1"/><line x1="497.6" y1="210.5" x2="497.6" y2="365" stroke="#12c812" stroke-width="1"/><line x1="484.4" y1="225.5" x2="484.4" y2="271.5" stroke="#12c812" stroke-width="1.8"/><line x1="484.4" y1="419.5" x2="484.4" y2="464.7" stroke="#12c812" stroke-width="1.8"/><line x1="516.5" y1="225.5" x2="516.5" y2="271.5" stroke="#12c812" stroke-width="1.8"/><line x1="516.5" y1="419.5" x2="516.5" y2="464.7" stroke="#12c812" stroke-width="1.8"/><line x1="741.5" y1="225.5" x2="741.5" y2="271.5" stroke="#12c812" stroke-width="1.8"/><line x1="741.5" y1="419.5" x2="741.5" y2="464.7" stroke="#12c812" stroke-width="1.8"/><line x1="774" y1="225.5" x2="774" y2="271.5" stroke="#12c812" stroke-width="1.8"/><line x1="774" y1="419.5" x2="774" y2="464.7" stroke="#12c812" stroke-width="1.8"/><line x1="480" y1="310.6" x2="505" y2="310.6" stroke="#9cc6d4" stroke-width="1"/><circle cx="480" cy="310.6" r="1.6" fill="#c8e6f0"/><circle cx="488.5" cy="310.6" r="1.6" fill="#c8e6f0"/><circle cx="497" cy="310.6" r="1.6" fill="#c8e6f0"/><circle cx="480" cy="319" r="1.6" fill="#c8e6f0"/><line x1="480.7" y1="310.6" x2="480.7" y2="319" stroke="#9cc6d4" stroke-width="1"/><line x1="504.5" y1="210.5" x2="504.5" y2="310.6" stroke="#9cc6d4" stroke-width="1"/><circle cx="504.5" cy="310.6" r="1.6" fill="#c8e6f0"/><line x1="546" y1="210.5" x2="546" y2="249" stroke="#9cc6d4" stroke-width="1"/><circle cx="546" cy="249" r="1.6" fill="#c8e6f0"/><line x1="578.3" y1="210.5" x2="578.3" y2="440.7" stroke="#9cc6d4" stroke-width="1"/><circle cx="578.3" cy="440.7" r="1.6" fill="#c8e6f0"/><line x1="601" y1="210.5" x2="601" y2="228.9" stroke="#9cc6d4" stroke-width="1"/><circle cx="601" cy="228.9" r="1.6" fill="#c8e6f0"/><line x1="642.6" y1="210.5" x2="642.6" y2="423.8" stroke="#9cc6d4" stroke-width="1"/><circle cx="642.6" cy="423.8" r="1.6" fill="#c8e6f0"/><line x1="674.5" y1="210.5" x2="674.5" y2="442.2" stroke="#9cc6d4" stroke-width="1"/><circle cx="674.5" cy="442.2" r="1.6" fill="#c8e6f0"/><line x1="706.8" y1="210.5" x2="706.8" y2="281.2" stroke="#9cc6d4" stroke-width="1"/><circle cx="706.8" cy="281.2" r="1.6" fill="#c8e6f0"/><circle cx="674.5" cy="313.2" r="1.6" fill="#c8e6f0"/><circle cx="674.5" cy="345.6" r="1.6" fill="#c8e6f0"/><circle cx="578.3" cy="345.6" r="1.6" fill="#c8e6f0"/><line x1="380" y1="365.9" x2="859" y2="365.9" stroke="#9cc6d4" stroke-width="1"/><circle cx="493.20000000000005" cy="365.9" r="1.6" fill="#c8e6f0"/><circle cx="525.4000000000001" cy="365.9" r="1.6" fill="#c8e6f0"/><circle cx="557.6" cy="365.9" r="1.6" fill="#c8e6f0"/><circle cx="589.8000000000001" cy="365.9" r="1.6" fill="#c8e6f0"/><circle cx="622.0" cy="365.9" r="1.6" fill="#c8e6f0"/><circle cx="654.2" cy="365.9" r="1.6" fill="#c8e6f0"/><circle cx="686.4000000000001" cy="365.9" r="1.6" fill="#c8e6f0"/><circle cx="718.6" cy="365.9" r="1.6" fill="#c8e6f0"/><circle cx="750.8000000000001" cy="365.9" r="1.6" fill="#c8e6f0"/><circle cx="783.0" cy="365.9" r="1.6" fill="#c8e6f0"/><circle cx="815.2" cy="365.9" r="1.6" fill="#c8e6f0"/><circle cx="847.4000000000001" cy="365.9" r="1.6" fill="#c8e6f0"/><circle cx="858.3" cy="365.9" r="1.6" fill="#c8e6f0"/><line x1="380" y1="398.4" x2="461" y2="398.4" stroke="#9cc6d4" stroke-width="1"/><circle cx="396.6" cy="398.4" r="1.6" fill="#c8e6f0"/><circle cx="428.8" cy="398.4" r="1.6" fill="#c8e6f0"/><circle cx="461" cy="398.4" r="1.6" fill="#c8e6f0"/><line x1="380" y1="424.5" x2="560.3" y2="424.5" stroke="#7fa8b8" stroke-width="1"/><line x1="560.3" y1="424.5" x2="560.3" y2="461.7" stroke="#9cc6d4" stroke-width="1"/><circle cx="560.3" cy="461.7" r="1.6" fill="#c8e6f0"/><circle cx="481.5" cy="200.5" r="10" fill="none" stroke="#7fb2c4" stroke-width="1.1"/><text x="481.5" y="205.5" text-anchor="middle" font-size="14" fill="#a8ccd8" textLength="12.5" lengthAdjust="spacingAndGlyphs">3b</text><circle cx="504.6" cy="200.5" r="10" fill="none" stroke="#7fb2c4" stroke-width="1.1"/><text x="504.6" y="205.5" text-anchor="middle" font-size="14" fill="#a8ccd8" textLength="12.5" lengthAdjust="spacingAndGlyphs">3b</text><circle cx="546" cy="200.5" r="10" fill="none" stroke="#7fb2c4" stroke-width="1.1"/><text x="546" y="205.5" text-anchor="middle" font-size="14" fill="#a8ccd8" textLength="12.5" lengthAdjust="spacingAndGlyphs">4a</text><circle cx="578.3" cy="200.5" r="10" fill="none" stroke="#7fb2c4" stroke-width="1.1"/><text x="578.3" y="205.5" text-anchor="middle" font-size="14" fill="#a8ccd8" textLength="7" lengthAdjust="spacingAndGlyphs">4</text><circle cx="601" cy="200.5" r="10" fill="none" stroke="#7fb2c4" stroke-width="1.1"/><text x="601" y="205.5" text-anchor="middle" font-size="14" fill="#a8ccd8" textLength="12.5" lengthAdjust="spacingAndGlyphs">3a</text><circle cx="642.2" cy="200.5" r="10" fill="none" stroke="#7fb2c4" stroke-width="1.1"/><text x="642.2" y="205.5" text-anchor="middle" font-size="14" fill="#a8ccd8" textLength="12.5" lengthAdjust="spacingAndGlyphs">3c</text><circle cx="674.5" cy="200.5" r="10" fill="none" stroke="#7fb2c4" stroke-width="1.1"/><text x="674.5" y="205.5" text-anchor="middle" font-size="14" fill="#a8ccd8" textLength="7" lengthAdjust="spacingAndGlyphs">2</text><circle cx="707" cy="200.5" r="10" fill="none" stroke="#7fb2c4" stroke-width="1.1"/><text x="707" y="205.5" text-anchor="middle" font-size="14" fill="#a8ccd8" textLength="12.5" lengthAdjust="spacingAndGlyphs">2a</text><circle cx="370" cy="366.4" r="10" fill="none" stroke="#7fb2c4" stroke-width="1.1"/><text x="370" y="371.4" text-anchor="middle" font-size="14" fill="#a8ccd8" textLength="12.5" lengthAdjust="spacingAndGlyphs">1a</text><circle cx="370" cy="398.4" r="10" fill="none" stroke="#7fb2c4" stroke-width="1.1"/><text x="370" y="403.4" text-anchor="middle" font-size="14" fill="#a8ccd8" textLength="7" lengthAdjust="spacingAndGlyphs">1</text><circle cx="370" cy="424.1" r="10" fill="none" stroke="#7fb2c4" stroke-width="1.1"/><text x="370" y="429.1" text-anchor="middle" font-size="14" fill="#a8ccd8" textLength="7" lengthAdjust="spacingAndGlyphs">3</text><line x1="460" y1="177.6" x2="513" y2="177.6" stroke="#0a5878" stroke-width="1.2"/><line x1="476" y1="177.6" x2="476" y2="197" stroke="#0a5878" stroke-width="1"/><rect x="473" y="175.6" width="6" height="4" fill="#1a8fbb" transform="rotate(45 476 177.6)"/><line x1="480.6" y1="177.6" x2="480.6" y2="197" stroke="#0a5878" stroke-width="1"/><rect x="477.6" y="175.6" width="6" height="4" fill="#1a8fbb" transform="rotate(45 480.6 177.6)"/><line x1="488.7" y1="177.6" x2="488.7" y2="197" stroke="#0a5878" stroke-width="1"/><rect x="485.7" y="175.6" width="6" height="4" fill="#1a8fbb" transform="rotate(45 488.7 177.6)"/><line x1="496.7" y1="177.6" x2="496.7" y2="197" stroke="#0a5878" stroke-width="1"/><rect x="493.7" y="175.6" width="6" height="4" fill="#1a8fbb" transform="rotate(45 496.7 177.6)"/><text x="466.2" y="174.08" text-anchor="middle" font-size="15.5" fill="#dcdcdc" textLength="12.8" lengthAdjust="spacingAndGlyphs">25</text><text x="507" y="174.08" text-anchor="middle" font-size="15.5" fill="#dcdcdc" textLength="12.8" lengthAdjust="spacingAndGlyphs">50</text><text x="484.3" y="191.68" text-anchor="middle" font-size="15.5" fill="#dcdcdc" textLength="12.8" lengthAdjust="spacingAndGlyphs">50</text><line x1="339.9" y1="307.2" x2="339.9" y2="466" stroke="#0a5878" stroke-width="1.2"/><line x1="347.8" y1="291" x2="347.8" y2="334.7" stroke="#0a5878" stroke-width="1.2"/><line x1="337" y1="307.2" x2="370" y2="307.2" stroke="#0a5878" stroke-width="1"/><line x1="337" y1="311" x2="370" y2="311" stroke="#0a5878" stroke-width="1"/><line x1="337" y1="318.9" x2="370" y2="318.9" stroke="#0a5878" stroke-width="1"/><line x1="337" y1="392.1" x2="370" y2="392.1" stroke="#0a5878" stroke-width="1"/><line x1="337" y1="424.1" x2="370" y2="424.1" stroke="#0a5878" stroke-width="1"/><line x1="337" y1="465.8" x2="370" y2="465.8" stroke="#0a5878" stroke-width="1"/><rect x="336.9" y="305.2" width="6" height="4" fill="#1a8fbb" transform="rotate(45 339.9 307.2)"/><rect x="344.8" y="305.2" width="6" height="4" fill="#1a8fbb" transform="rotate(45 347.8 307.2)"/><rect x="344.8" y="309" width="6" height="4" fill="#1a8fbb" transform="rotate(45 347.8 311)"/><rect x="344.8" y="316.9" width="6" height="4" fill="#1a8fbb" transform="rotate(45 347.8 318.9)"/><rect x="336.9" y="390.1" width="6" height="4" fill="#1a8fbb" transform="rotate(45 339.9 392.1)"/><rect x="336.9" y="422.1" width="6" height="4" fill="#1a8fbb" transform="rotate(45 339.9 424.1)"/><rect x="336.9" y="463.8" width="6" height="4" fill="#1a8fbb" transform="rotate(45 339.9 465.8)"/><text x="336" y="302.28" text-anchor="middle" font-size="15.5" fill="#dcdcdc" textLength="12.8" lengthAdjust="spacingAndGlyphs" transform="rotate(-90 336 296.7)">25</text><text x="336" y="334.38" text-anchor="middle" font-size="15.5" fill="#dcdcdc" textLength="12.8" lengthAdjust="spacingAndGlyphs" transform="rotate(-90 336 328.8)">50</text><text x="328.8" y="355.38" text-anchor="middle" font-size="15.5" fill="#dcdcdc" textLength="19.200000000000003" lengthAdjust="spacingAndGlyphs" transform="rotate(-90 328.8 349.8)">529</text><text x="328.8" y="413.38" text-anchor="middle" font-size="15.5" fill="#dcdcdc" textLength="19.200000000000003" lengthAdjust="spacingAndGlyphs" transform="rotate(-90 328.8 407.8)">200</text><text x="328.8" y="449.38" text-anchor="middle" font-size="15.5" fill="#dcdcdc" textLength="19.200000000000003" lengthAdjust="spacingAndGlyphs" transform="rotate(-90 328.8 443.8)">261</text><line x1="918.6" y1="210.4" x2="918.6" y2="513" stroke="#0a5878" stroke-width="1.2"/><line x1="888" y1="210.4" x2="921" y2="210.4" stroke="#0a5878" stroke-width="1"/><line x1="888" y1="225.1" x2="921" y2="225.1" stroke="#0a5878" stroke-width="1"/><line x1="888" y1="228.9" x2="921" y2="228.9" stroke="#0a5878" stroke-width="1"/><line x1="888" y1="248.9" x2="921" y2="248.9" stroke="#0a5878" stroke-width="1"/><line x1="888" y1="442.1" x2="921" y2="442.1" stroke="#0a5878" stroke-width="1"/><line x1="888" y1="461.9" x2="921" y2="461.9" stroke="#0a5878" stroke-width="1"/><line x1="888" y1="465.8" x2="921" y2="465.8" stroke="#0a5878" stroke-width="1"/><line x1="888" y1="513" x2="921" y2="513" stroke="#0a5878" stroke-width="1"/><rect x="915.6" y="208.4" width="6" height="4" fill="#1a8fbb" transform="rotate(45 918.6 210.4)"/><rect x="915.6" y="225" width="6" height="4" fill="#1a8fbb" transform="rotate(45 918.6 227)"/><rect x="915.6" y="246.9" width="6" height="4" fill="#1a8fbb" transform="rotate(45 918.6 248.9)"/><rect x="915.6" y="440.1" width="6" height="4" fill="#1a8fbb" transform="rotate(45 918.6 442.1)"/><rect x="915.6" y="461.8" width="6" height="4" fill="#1a8fbb" transform="rotate(45 918.6 463.8)"/><rect x="915.6" y="511" width="6" height="4" fill="#1a8fbb" transform="rotate(45 918.6 513)"/><text x="908" y="222.98" text-anchor="middle" font-size="15.5" fill="#dcdcdc" textLength="12.8" lengthAdjust="spacingAndGlyphs" transform="rotate(-90 908 217.4)">90</text><text x="926" y="232.28" text-anchor="middle" font-size="15.5" fill="#dcdcdc" textLength="12.8" lengthAdjust="spacingAndGlyphs" transform="rotate(-90 926 226.7)">25</text><text x="908" y="243.18" text-anchor="middle" font-size="15.5" fill="#dcdcdc" textLength="19.200000000000003" lengthAdjust="spacingAndGlyphs" transform="rotate(-90 908 237.6)">125</text><text x="908" y="350.58" text-anchor="middle" font-size="15.5" fill="#dcdcdc" textLength="32" lengthAdjust="spacingAndGlyphs" transform="rotate(-90 908 345)">200x6</text><text x="908.8" y="456.48" text-anchor="middle" font-size="15.5" fill="#dcdcdc" textLength="19.200000000000003" lengthAdjust="spacingAndGlyphs" transform="rotate(-90 908.8 450.9)">125</text><text x="926.4" y="469.48" text-anchor="middle" font-size="15.5" fill="#dcdcdc" textLength="12.8" lengthAdjust="spacingAndGlyphs" transform="rotate(-90 926.4 463.9)">25</text><text x="908.8" y="495.08" text-anchor="middle" font-size="15.5" fill="#dcdcdc" textLength="19.200000000000003" lengthAdjust="spacingAndGlyphs" transform="rotate(-90 908.8 489.5)">290</text><line x1="379.3" y1="552.1" x2="878.4" y2="552.1" stroke="#0a5878" stroke-width="1.2"/><line x1="379.3" y1="522" x2="379.3" y2="555" stroke="#0a5878" stroke-width="1"/><line x1="394" y1="522" x2="394" y2="555" stroke="#0a5878" stroke-width="1"/><line x1="396.4" y1="522" x2="396.4" y2="555" stroke="#0a5878" stroke-width="1"/><line x1="847" y1="522" x2="847" y2="555" stroke="#0a5878" stroke-width="1"/><line x1="858.4" y1="522" x2="858.4" y2="555" stroke="#0a5878" stroke-width="1"/><line x1="863.4" y1="522" x2="863.4" y2="555" stroke="#0a5878" stroke-width="1"/><line x1="878.4" y1="522" x2="878.4" y2="555" stroke="#0a5878" stroke-width="1"/><rect x="376.3" y="550.1" width="6" height="4" fill="#1a8fbb" transform="rotate(45 379.3 552.1)"/><rect x="392.2" y="550.1" width="6" height="4" fill="#1a8fbb" transform="rotate(45 395.2 552.1)"/><rect x="844" y="550.1" width="6" height="4" fill="#1a8fbb" transform="rotate(45 847 552.1)"/><rect x="855.4" y="550.1" width="6" height="4" fill="#1a8fbb" transform="rotate(45 858.4 552.1)"/><rect x="860.4" y="550.1" width="6" height="4" fill="#1a8fbb" transform="rotate(45 863.4 552.1)"/><rect x="875.4" y="550.1" width="6" height="4" fill="#1a8fbb" transform="rotate(45 878.4 552.1)"/><text x="387" y="548.98" text-anchor="middle" font-size="15.5" fill="#dcdcdc" textLength="12.8" lengthAdjust="spacingAndGlyphs">90</text><text x="396.1" y="566.58" text-anchor="middle" font-size="15.5" fill="#dcdcdc" textLength="12.8" lengthAdjust="spacingAndGlyphs">15</text><text x="621.4" y="548.98" text-anchor="middle" font-size="15.5" fill="#dcdcdc" textLength="38" lengthAdjust="spacingAndGlyphs">200x14</text><text x="852.7" y="548.98" text-anchor="middle" font-size="15.5" fill="#dcdcdc" textLength="12.8" lengthAdjust="spacingAndGlyphs">70</text><text x="871" y="548.98" text-anchor="middle" font-size="15.5" fill="#dcdcdc" textLength="12.8" lengthAdjust="spacingAndGlyphs">90</text><text x="861" y="566.48" text-anchor="middle" font-size="15.5" fill="#dcdcdc" textLength="12.8" lengthAdjust="spacingAndGlyphs">35</text><text x="593.5" y="628.8" font-size="22" fill="#f0f0f0" textLength="72.5" lengthAdjust="spacingAndGlyphs">板配筋图</text><line x1="588" y1="635.5" x2="669" y2="635.5" stroke="#f0f0f0" stroke-width="2.2"/><rect x="453.9" y="147.39999999999998" width="72.4" height="51.30000000000002" rx="6" fill="none" stroke="#f58b3c" stroke-width="4.4"/><rect x="479.7" y="219.5" width="384.80000000000007" height="25.6" rx="6" fill="none" stroke="#f58b3c" stroke-width="4.4"/><rect x="315.0" y="264.4" width="48.29999999999999" height="244.20000000000002" rx="6" fill="none" stroke="#f58b3c" stroke-width="4.4"/><rect x="389.8" y="446.5" width="474.4" height="24.79999999999999" rx="6" fill="none" stroke="#f58b3c" stroke-width="4.4"/></svg>

<!-- view toolbar -->
<div class="a" style="left:259px;top:114px;width:4px;height:547px;background:#f4f4f4"></div>
<div class="a" style="left:263px;top:114px;width:807px;height:21px;background:#f0f0f0"></div>
<svg class="a" style="left:263px;top:114px" width="170" height="21" viewBox="263 114 170 21">
<g fill="none" stroke="#444" stroke-width="1">
<path d="M272.5,122v-3h3M280.5,119h3v3M283.5,127v3h-3M275.5,130h-3v-3"/><circle cx="278" cy="124.5" r="2.8"/><path d="M278,120v9M273.5,124.5h9" stroke-width="1.3"/>
<path d="M292,126l-2-2 1-1 2,2v-5a1,1 0 0 1 2,0v-1a1,1 0 0 1 2,0v1a1,1 0 0 1 2,0v7c0,2-1,3-3,3h-2z"/>
<path d="M308,124.5a4.5,2.5 0 0 1 9,0M317,124.5a4.5,2.5 0 0 1 -9,0M312.5,120v-1.5M312.5,129v1.5M310.5,120l2-2 2,2M310.5,129l2,2 2-2"/>
</g>
<g fill="none" stroke="#aaa" stroke-width="0.9">
<path d="M325,122h7v7h-7zM325,122l2.5-2.5h7l-2.5,2.5M334.5,119.5v7l-2.5,2.5"/>
</g>
<rect x="339" y="117" width="16" height="16" fill="#cfcfcf"/>
<g fill="none" stroke="#777" stroke-width="0.9"><path d="M341.5,122h7v7h-7zM341.5,122l2.5-2.5h7l-2.5,2.5M351,119.5v7l-2.5,2.5M344,119.5v7h7M344,126.5l-2.5,2.5"/></g>
<g fill="none" stroke="#555" stroke-width="0.9"><path d="M358.5,122h7v7h-7zM358.5,122l2.5-2.5h7l-2.5,2.5M368,119.5v7l-2.5,2.5" fill="#ddd"/></g>
<g fill="#d8d8d8" stroke="#999" stroke-width="0.8"><path d="M375.5,122h7v7h-7zM375.5,122l2.5-2.5h7l-2.5,2.5zM385,119.5v7l-2.5,2.5v-7z"/></g>
<g fill="#dcdcdc"><path d="M393,122h7v7h-7zM393,122l2.5-2.5h7l-2.5,2.5zM402.5,119.5v7l-2.5,2.5v-7z"/></g>
<path d="M411.5,120.5l4,3 4-3M411.5,124.5l4,3 4-3" fill="none" stroke="#555" stroke-width="1"/>
</svg>
<!-- command bar -->
<div class="a" style="left:578px;top:639px;width:338px;height:17px;background:#969696;border-top:1px solid #3a3a3a;border-bottom:2px solid #4a4a4a;border-left:2px solid #5a5a5a"></div>
<div class="a" style="left:902px;top:641px;width:14px;height:14px;background:#d8d8d8;border:1px solid #888"></div>
<div class="t" style="left:904.5px;top:643.5px;font-size:8px;color:#222">▲</div>
<svg class="a" style="left:886px;top:642px" width="14" height="12"><circle cx="8" cy="5" r="3.5" fill="none" stroke="#3a5878" stroke-width="1.2"/><path d="M5.5,7.5l-3.5,3.5" stroke="#3a5878" stroke-width="1.5"/></svg>
<!-- status bar -->
<div class="a" style="left:259px;top:656px;width:811px;height:22px;background:#e8e8e8;border-top:1px solid #dadada"></div>
<svg class="a" style="left:500px;top:656px" width="360" height="22" viewBox="500 656 360 22">
<path d="M518.5,659v16" stroke="#999" stroke-dasharray="1,1.5"/>
<path d="M525,670l3-4h6l-3,4z" fill="#fff" stroke="#444" stroke-width="0.9"/><path d="M525,670v1.5h6l3-4v-1.5" fill="none" stroke="#444" stroke-width="0.9"/>
<rect x="544" y="659" width="16" height="16" fill="#cfcfcf"/><path d="M547,670l5-6h5l-5,6zM547,672l5-6M549,673l6-7" fill="none" stroke="#555" stroke-width="1"/>
<rect x="566" y="659" width="16" height="16" fill="#cfcfcf"/><path d="M572,661h4v12h-4z" fill="#eee" stroke="#555" stroke-width="0.9"/>
<rect x="588" y="659" width="16" height="16" fill="#d8d8d8"/><path d="M591,664h8l2,2v6h-8l-2-2z" fill="#f4f4f4" stroke="#555" stroke-width="0.9"/>
<rect x="611" y="659" width="16" height="16" fill="#d8d8d8"/><rect x="614" y="662" width="10" height="10" fill="none" stroke="#444"/><g fill="#4aa088"><rect x="616" y="664" width="2.5" height="2.5"/><rect x="620" y="664" width="2.5" height="2.5"/><rect x="616" y="668" width="2.5" height="2.5"/><rect x="620" y="668" width="2.5" height="2.5"/></g>
<rect x="634" y="659" width="16" height="16" fill="#d8d8d8"/><rect x="637" y="662" width="10" height="10" fill="none" stroke="#444"/><rect x="639" y="664" width="6" height="6" fill="#bfe0d0" stroke="#4aa088" stroke-width="0.7"/>
<rect x="657.5" y="659.5" width="47" height="17" fill="#fff" stroke="#ccc"/>
<path d="M710.5,659v16" stroke="#999" stroke-dasharray="1,1.5"/>
<g stroke="#9cc0e0" stroke-width="1.2"><line x1="717" y1="664.5" x2="728" y2="664.5"/><line x1="717" y1="668" x2="728" y2="668" stroke-dasharray="1.5,1"/></g>
<path d="M740,662v11h11M742,666h3v6h-3zM746,668h3v4h-3z" fill="#5aa0e0" stroke="#3a7ac0" stroke-width="0.8"/>
<path d="M762,671l6-7 4,3-6,7z" fill="#70c060" stroke="#3a8a3a" stroke-width="0.8"/><path d="M765,670l4-4" stroke="#fff" stroke-width="1"/>
<path d="M784,664h10v6h-10z" fill="#5aa0e0"/><path d="M786,670v4h6" fill="none" stroke="#666" stroke-width="0.9"/><rect x="789" y="670" width="4" height="3" fill="#60b050"/>
<path d="M806,664h12v3h-12zM806,668h12v3h-12z" fill="#5aa0e0"/><path d="M808,663h8" stroke="#f0c040" stroke-width="1.4"/>
<path d="M830,666h8v6h-8z" fill="#5aa0e0"/><rect x="835" y="667" width="5" height="4" fill="#e04040"/><path d="M830,669h-2" stroke="#40a040" stroke-width="2"/>
<g stroke="#d0d0d0"><line x1="539.5" y1="659" x2="539.5" y2="675"/><line x1="562.5" y1="659" x2="562.5" y2="675"/><line x1="585.5" y1="659" x2="585.5" y2="675"/><line x1="607.5" y1="659" x2="607.5" y2="675"/><line x1="630.5" y1="659" x2="630.5" y2="675"/><line x1="653.5" y1="659" x2="653.5" y2="675"/>
<line x1="734.5" y1="659" x2="734.5" y2="675"/><line x1="756.5" y1="659" x2="756.5" y2="675"/><line x1="778.5" y1="659" x2="778.5" y2="675"/><line x1="801.5" y1="659" x2="801.5" y2="675"/><line x1="824.5" y1="659" x2="824.5" y2="675"/></g>
</svg>
<div class="t" style="left:660px;top:664px;font-size:8px;color:#444">精细显示</div><div class="t" style="left:697px;top:665px;font-size:5px;color:#555">▼</div>
<!-- quick launch bulb -->
<svg class="a" style="left:774px;top:31px" width="10" height="12"><path d="M5,1a3.2,3.2 0 0 1 3.2,3.2c0,1.6-1.2,2.3-1.5,3.8h-3.4c-0.3-1.5-1.5-2.2-1.5-3.8a3.2,3.2 0 0 1 3.2,-3.2zM3.5,9.5h3M4,11h2" fill="none" stroke="#d0d0d0" stroke-width="0.9"/></svg>
<!-- logos -->
<svg class="a" style="left:996px;top:674px" width="288" height="27" viewBox="996 674 288 27" font-family="Liberation Sans, sans-serif">
<ellipse cx="1008.5" cy="686" rx="9.5" ry="7.5" fill="none" stroke="#2a5fa8" stroke-width="1.3"/>
<path d="M1000,690h17M1004,684v6M1008.5,680v10M1013,684v6" stroke="#2a5fa8" stroke-width="1.6"/>
<text x="1022" y="686" font-size="9" fill="#222" textLength="122" lengthAdjust="spacingAndGlyphs" font-weight="bold">中国建筑科学研究院有限公司</text>
<text x="1022" y="693" font-size="5.5" fill="#222" textLength="122" lengthAdjust="spacingAndGlyphs" font-weight="bold">China Academy of Building Research</text>
<path d="M1160,676l-7,5v13l7-3v-5l5,2v5l-5,2" fill="none" stroke="#2a5fa8" stroke-width="2.6"/>
<text x="1170" y="686" font-size="9" fill="#222" textLength="105" lengthAdjust="spacingAndGlyphs" font-weight="bold">北京构力科技有限公司</text>
<text x="1170" y="692.5" font-size="5" fill="#222" textLength="105" lengthAdjust="spacingAndGlyphs" font-weight="bold">Beijing Glory PKPM Technology Co.,Ltd</text>
</svg>

<!-- callouts -->
<div class="callout" style="left:537px;top:134px;width:385px;height:45px">
<div class="bul" style="left:12px;top:17px"></div>
<div class="t" style="left:44px;top:13px;font-size:18.2px">增加隔墙/洞口/切角加强筋定位表达</div></div>
<div class="callout" style="left:33px;top:401px;width:254px;height:45px">
<div class="bul" style="left:11px;top:17px"></div>
<div class="t" style="left:44px;top:13px;font-size:18px">增加柱搁置尺寸单独控制</div></div>
<div class="callout" style="left:933px;top:436px;width:336px;height:136px">
<div class="bul" style="left:12px;top:17px"></div>
<div class="t" style="left:44px;top:15px;font-size:17.7px">X向和Y向配筋参数完全分开</div>
<div class="bul" style="left:12px;top:62px"></div>
<div class="t" style="left:44px;top:60px;font-size:17.7px">端部加强筋/普通钢筋全面控制</div>
<div class="bul" style="left:12px;top:107px"></div>
<div class="t" style="left:44px;top:105px;font-size:17.7px">考虑/不考虑加强筋进行底筋排列</div></div>

</div></body></html>
